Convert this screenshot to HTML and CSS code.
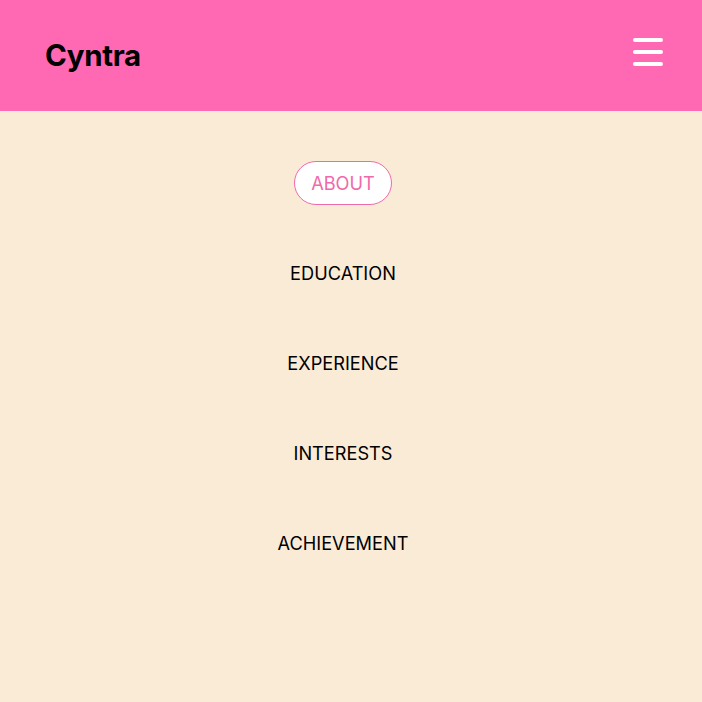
FILE: index.html
```html
<!DOCTYPE html>
<html>
<head>
<meta charset="utf-8">
<link rel="stylesheet" href="styles.css">
</head>
<body>
<header class="header">
  <div class="logo">Cyntra</div>
  <button class="burger" aria-label="menu">
    <span></span><span></span><span></span>
  </button>
</header>
<nav class="nav">
  <ul class="nav-list">
    <li><a class="nav-link active" href="#">ABOUT</a></li>
    <li><a class="nav-link" href="#">EDUCATION</a></li>
    <li><a class="nav-link" href="#">EXPERIENCE</a></li>
    <li><a class="nav-link" href="#">INTERESTS</a></li>
    <li><a class="nav-link" href="#">ACHIEVEMENT</a></li>
  </ul>
</nav>
</body>
</html>
```
FILE: styles.css
```css
* { box-sizing: border-box; }
html, body { margin: 0; padding: 0; }
body {
  background: #faebd7;
  font-family: Inter, "Noto Sans", sans-serif;
  height: 702px;
}
.header {
  height: 111px;
  background: #ff69b4;
  display: flex;
  align-items: center;
  justify-content: space-between;
  padding: 0 39px 0 45px;
}
.logo {
  font-size: 29.5px;
  font-weight: 700;
  color: #000;
  letter-spacing: -0.3px;
  margin-top: -2px;
}
.burger {
  background: none;
  border: 0;
  padding: 0;
  width: 30px;
  display: flex;
  flex-direction: column;
  gap: 8px;
  margin-top: -7px;
}
.burger span {
  display: block;
  height: 4px;
  width: 30px;
  border-radius: 2px;
  background: #fff;
}
.nav-list {
  list-style: none;
  margin: 0;
  padding: 50px 16px 0 0;
  display: flex;
  flex-direction: column;
  align-items: center;
  gap: 46px;
}
.nav-link {
  display: block;
  height: 44px;
  line-height: 43px;
  padding: 0 16px;
  font-size: 18.2px;
  color: #000;
  text-decoration: none;
  border: 1px solid transparent;
  border-radius: 22px;
}
.nav-link.active {
  background: #fff;
  color: #f06aaa;
  border-color: #f06aaa;
}
```
